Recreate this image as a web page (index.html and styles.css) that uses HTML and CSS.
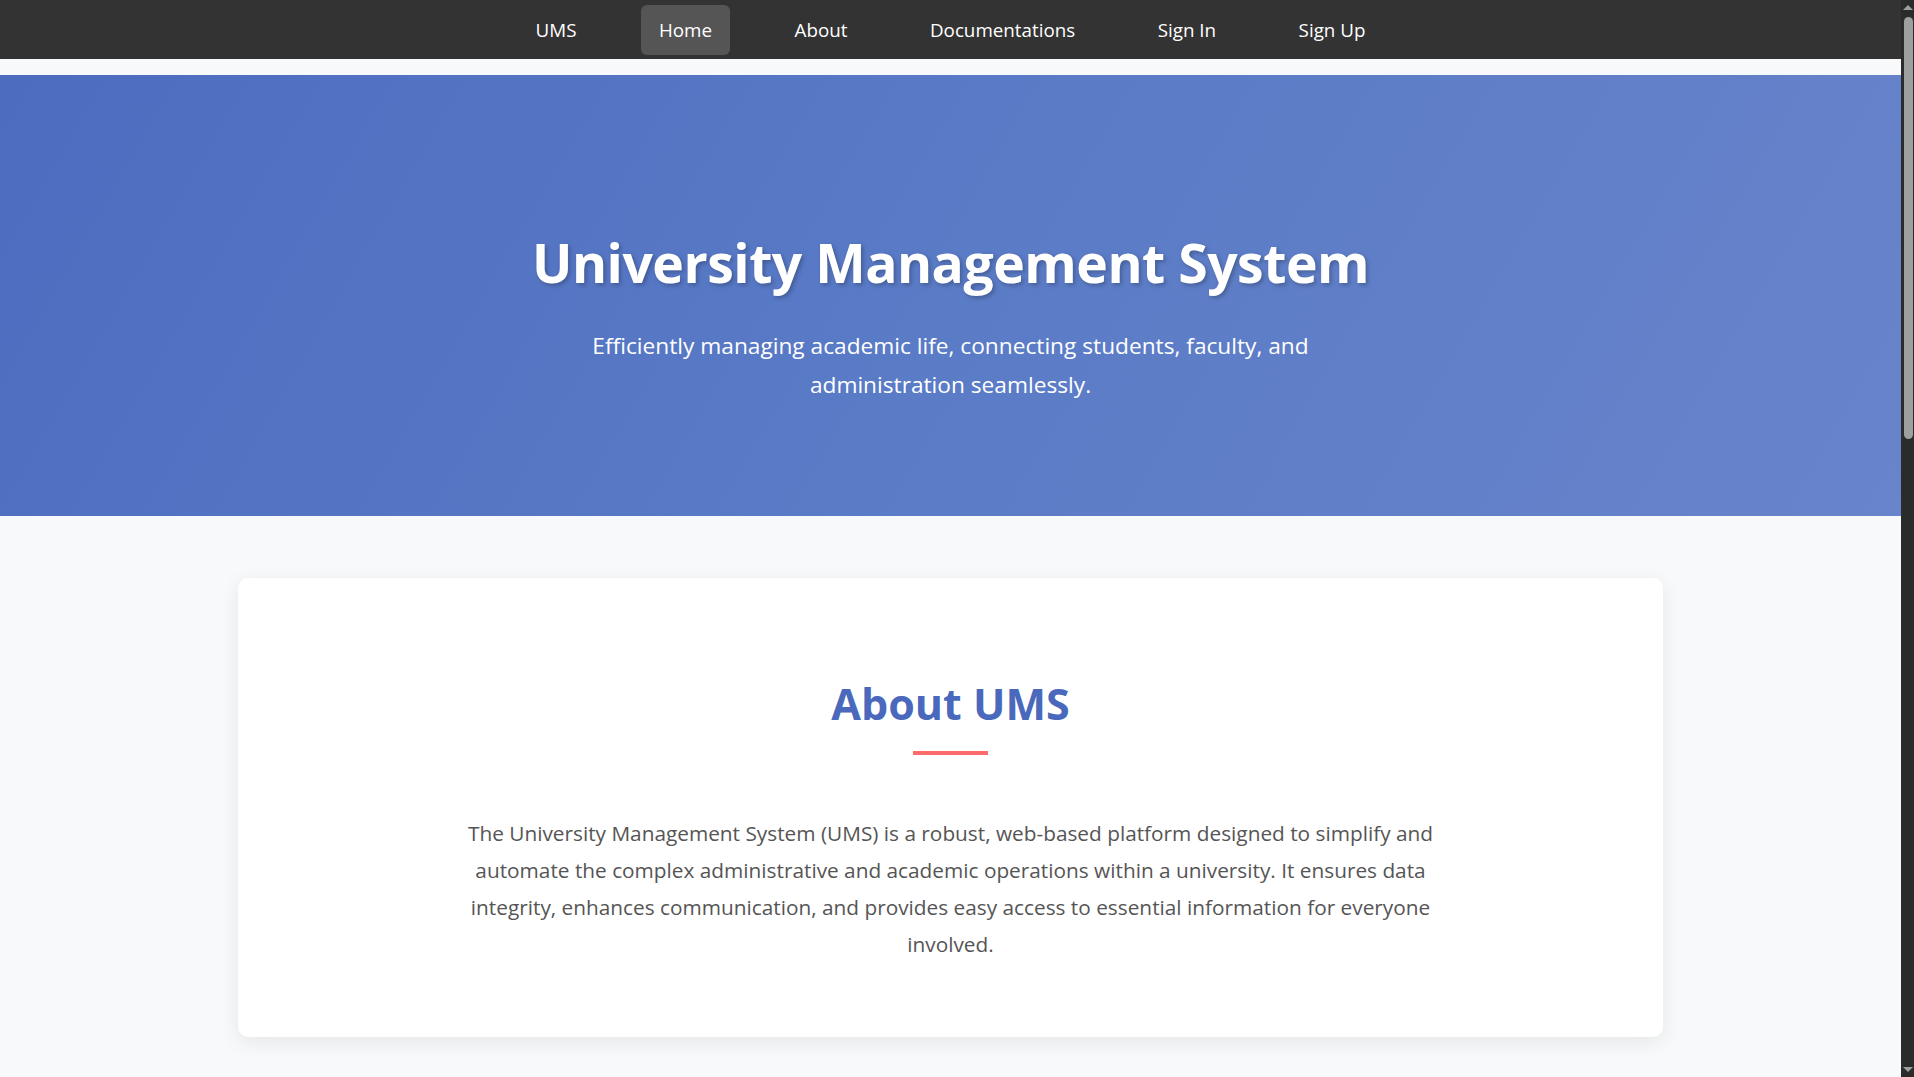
FILE: index.html
```html
<!DOCTYPE html>
<html>
	<head>
		<meta charset="utf-8">
		<title>UMS - University Management System</title>
		<link rel="stylesheet" href="styles.css">
	</head>
	<body>
		<div class="page">
			<nav class="topnav">
				<a href="#">UMS</a>
				<a href="#" class="active">Home</a>
				<a href="#">About</a>
				<a href="#">Documentations</a>
				<a href="#">Sign In</a>
				<a href="#">Sign Up</a>
			</nav>

			<header class="hero">
				<h1>University Management System</h1>
				<p>Efficiently managing academic life, connecting students, faculty, and administration seamlessly.</p>
			</header>

			<section class="card">
				<h2>About UMS</h2>
				<div class="underline"></div>
				<p>The University Management System (UMS) is a robust, web-based platform designed to simplify and
				automate the complex administrative and academic operations within a university. It ensures data
				integrity, enhances communication, and provides easy access to essential information for everyone
				involved.</p>
			</section>

			<section class="card">
				<h2>Key Features</h2>
				<div class="underline"></div>
				<div class="features">
					<div class="feature"><h3>Student Records</h3><p>Enrollment, grades and transcripts kept in one place.</p></div>
					<div class="feature"><h3>Course Management</h3><p>Schedules, syllabi and registration for every term.</p></div>
					<div class="feature"><h3>Faculty Portal</h3><p>Attendance, marks and announcements for teachers.</p></div>
				</div>
			</section>

			<section class="card">
				<h2>Get Started</h2>
				<div class="underline"></div>
				<p>Sign up for an account or sign in to access your dashboard.</p>
			</section>

			<footer class="footer">
				&copy; University Management System
			</footer>
		</div>

		<!-- window scrollbar, as the browser drew it -->
		<div class="scrollbar">
			<div class="arrow up"></div>
			<div class="thumb"></div>
			<div class="track"></div>
			<div class="arrow down"></div>
		</div>
	</body>
</html>
```

FILE: styles.css
```css
html { background: #f8f9fa; }

body { margin: 0; background: #f8f9fa; display: flex; align-items: flex-start;
	font-family: "Open Sans", "Noto Sans", sans-serif; color: #555;
}

.page { flex: 1; min-width: 0; }

.scrollbar { width: 13px; height: 100vh; background: #2b2b2b;
	position: sticky; top: 0; display: flex; flex-direction: column; align-items: center;
}
.scrollbar .thumb { width: 9px; height: 422px; margin: 2px 0 0 1px;
	background: #9f9f9f; border-radius: 5px; }
.scrollbar .track { flex: 1; }
.scrollbar .arrow { width: 0; height: 0; margin: 5px 0 5px 1px;
	border-left: 5px solid transparent; border-right: 5px solid transparent; }
.scrollbar .arrow.up { border-bottom: 5px solid #9f9f9f; }
.scrollbar .arrow.down { border-top: 5px solid #9f9f9f; }

.topnav { background: #333; height: 59px;
	display: flex; justify-content: center; align-items: center; gap: 46.5px;
}

.topnav a { color: #fff; text-decoration: none; font-size: 18.8px;
	padding: 11px 18px; border-radius: 6px; line-height: 28px;
}

.topnav a.active { background: #555; }

.hero { margin-top: 16px; height: 441px; box-sizing: border-box;
	background: linear-gradient(120deg, #4d6cc0 0%, #5a7bc6 50%, #6884cb 100%);
	color: #fff; text-align: center; padding-top: 153px;
}

.hero h1 { margin: 0; font-size: 53.5px; font-weight: 700; line-height: 70px;
	text-shadow: 2px 2px 4px rgba(0,0,0,0.25); letter-spacing: -0.5px;
}

.hero p { margin: 28px auto 0; max-width: 760px; font-size: 22.7px; line-height: 39px; }

.card { background: #fff; width: 1425px; box-sizing: border-box;
	margin: 62px auto; border-radius: 10px; padding: 98px 110px 74px;
	box-shadow: 0 5px 20px rgba(0,0,0,0.08); text-align: center;
}

.card h2 { margin: 0; color: #4a69bd; font-size: 43px; line-height: 56px; font-weight: 700; }

.underline { width: 75px; height: 4px; background: #ff6b6b; margin: 19px auto 60px; }

.card p { margin: 0 auto; max-width: 1000px; font-size: 20.8px; line-height: 37px; }

.features { display: grid; grid-template-columns: 1fr 1fr 1fr; gap: 30px; }
.feature { background: #f8f9fa; border-radius: 8px; padding: 30px; }
.feature h3 { margin: 0 0 10px; color: #4a69bd; }

.footer { background: #333; color: #ccc; text-align: center; padding: 30px; margin-top: 60px; }
```
